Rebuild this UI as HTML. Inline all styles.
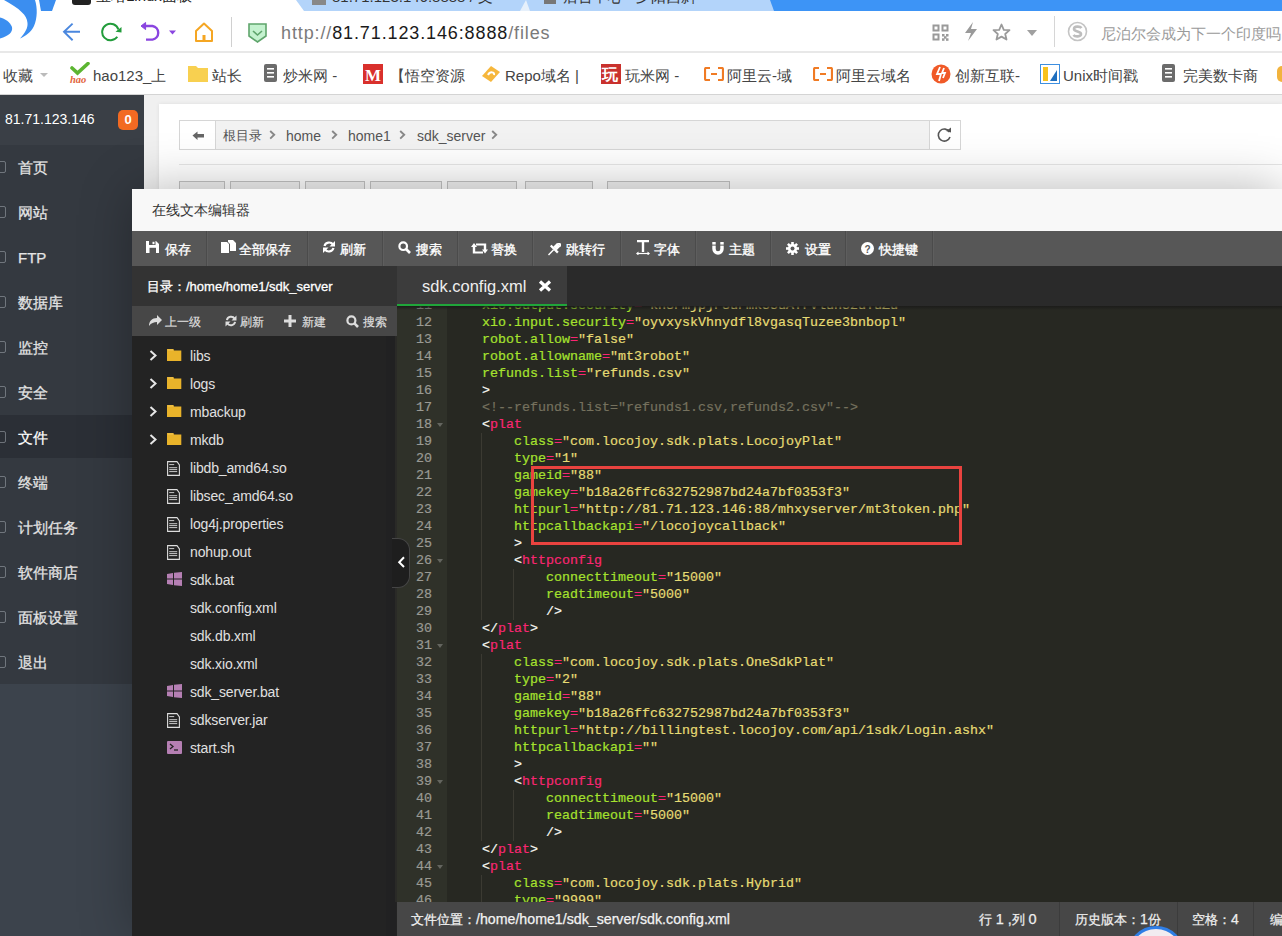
<!DOCTYPE html>
<html><head><meta charset="utf-8">
<style>
*{margin:0;padding:0;box-sizing:border-box}
html,body{width:1282px;height:936px;overflow:hidden;background:#fff;font-family:"Liberation Sans",sans-serif}
.abs{position:absolute}
#tabs{left:0;top:0;width:1282px;height:10px;background:#3d94f6}
#nav{left:0;top:10px;width:1282px;height:45px;background:#fff}
#bm{left:0;top:55px;width:1282px;height:40px;background:#fff;border-bottom:1px solid #dcdcdc}
.bmi{position:absolute;top:67px;font-size:15px;color:#444;white-space:nowrap;line-height:18px}
#side{left:0;top:96px;width:143px;height:840px;background:#363b43}
#sidehead{left:0;top:96px;width:143px;height:50px;background:#3b4048}
.mi{position:absolute;left:18px;font-size:15px;color:#e6e6e6;line-height:20px;white-space:nowrap;-webkit-text-stroke:0.25px currentColor}
#main{left:143px;top:96px;width:1139px;height:840px;background:#f0f0f0}
#modal{left:132px;top:187px;width:1150px;height:749px;background:#252525}
#mtitle{left:132px;top:187px;width:1150px;height:44px;background:#f8f8f8;border-bottom:1px solid #e5e5e5}
#mtool{left:132px;top:231px;width:1150px;height:35px;background:#575757}
.tb{position:absolute;top:240.7px;font-size:13.2px;font-weight:500;-webkit-text-stroke:0.35px #fff;color:#fff;line-height:17px;white-space:nowrap}
.sep{position:absolute;top:231px;width:1px;height:35px;background:#4a4a4a}
#fhead{left:132px;top:266px;width:265px;height:40px;background:#2d2d2d}
#fsub{left:132px;top:306px;width:265px;height:30px;background:#3b3b3b}
#flist{left:132px;top:336px;width:265px;height:600px;background:#242424}
.fi{position:absolute;font-size:14px;letter-spacing:-0.15px;color:#e0e0e0;line-height:17px;white-space:nowrap}
#etabs{left:397px;top:266px;width:885px;height:40px;background:#2a2a2a}
#code{left:397px;top:306px;width:885px;height:596px;background:#272822;overflow:hidden}
#gutter{left:397px;top:306px;width:50px;height:596px;background:#2f3129}
#status{left:397px;top:902px;width:885px;height:34px;background:#474747}
.cl{position:absolute;left:0;height:17px;line-height:17px;font-family:"Liberation Mono",monospace;font-size:13.333px;white-space:pre;color:#f8f8f2;-webkit-text-stroke:0.2px currentColor}
.ln{position:absolute;left:0;width:35px;text-align:right;height:17px;line-height:17px;font-family:"Liberation Mono",monospace;font-size:13.333px;color:#9a9a94;-webkit-text-stroke:0.2px #9a9a94}
.a{color:#a6e22e}.s{color:#e6db74}.e{color:#f92672}.t{color:#f92672}.c{color:#75715e}
</style></head><body>

<!-- tab strip -->
<div class="abs" style="left:0;top:0;width:1282px;height:11px;background:#3d94f6"></div>
<div class="abs" style="left:0;top:0;width:305px;height:11px;background:#fff"></div>
<svg class="abs" style="left:296px;top:0" width="480" height="11"><path d="M0 0 L228 0 L232 11 L8 11 Z" fill="#b3d4fa"/><path d="M222 0 L474 0 L478 11 L228 11 Z" fill="#b3d4fa"/><path d="M224 11 L230 0 L234 11Z" fill="#e6f0fb"/><path d="M483 0 L500 0 L503 6 L486 6 Z" fill="#e8f1fd"/></svg>
<div class="abs" style="left:72px;top:-4px;width:19px;height:9px;background:#222;border-radius:3px"></div>
<div class="abs" style="left:96px;top:-13px;font-size:15px;color:#222;line-height:18px;white-space:nowrap">宝塔Linux面板</div>
<div class="abs" style="left:312px;top:0;width:14px;height:5px;background:#888"></div>
<div class="abs" style="left:332px;top:-12px;font-size:15px;color:#333;line-height:18px;white-space:nowrap">81.71.123.146:8888 / 文</div>
<div class="abs" style="left:544px;top:-3px;width:12px;height:7px;background:#777"></div>
<div class="abs" style="left:563px;top:-12px;font-size:15px;color:#333;line-height:18px;white-space:nowrap">后台中心 - 夕阳西斜</div>
<!-- logo -->
<svg class="abs" style="left:0;top:0" width="60" height="45"><path d="M4 0 L35 0 C37.5 8 37.5 18 34 26 C31 32 26 36 20 38.5 C25 33 28 28 27.5 23 C27 15 20 9 4 0 Z" fill="#3b8ef0"/><path d="M0 17.5 C5 18.5 10 22 12 27 C13 32 9 36 0 38.5 Z" fill="#3b8ef0"/><path d="M39 0 L56 0 L52 11 L41 11 Z" fill="#3b8ef0"/></svg>
<!-- nav -->
<div class="abs" style="left:0;top:51px;width:1282px;height:2px;background:#e8e8e8"></div>
<svg class="abs" style="left:60px;top:20px" width="22" height="24"><path d="M20 11.75 H4 M12.6 3.6 L4 11.75 L12.6 20.2" stroke="#4a87de" stroke-width="1.9" fill="none"/></svg>
<svg class="abs" style="left:100px;top:22px" width="24" height="22"><path d="M17.3 14.76 A8.3 8.3 0 1 1 18.4 7.5" stroke="#229c3b" stroke-width="2" fill="none"/><path d="M21.5 5 L21.5 10.5 L15.5 9.8 Z" fill="#229c3b"/></svg>
<svg class="abs" style="left:140px;top:20px" width="40" height="22"><path d="M5 6 H12.5 A6.9 6.9 0 0 1 12.5 19.6 H6" stroke="#8a45e0" stroke-width="2.4" fill="none"/><path d="M1 6 L5.6 2.5 L5.6 9.6 Z" fill="#8a45e0" stroke="#8a45e0" stroke-width="1" stroke-linejoin="round"/><path d="M29 10.5 L36 10.5 L32.5 14.5 Z" fill="#8a45e0"/></svg>
<svg class="abs" style="left:194px;top:22px" width="20" height="21"><path d="M2 9 L10 1.5 L18 9 V19 H2 Z" stroke="#f5a623" stroke-width="2" fill="none" stroke-linejoin="round"/><rect x="8.5" y="13" width="3" height="6" fill="#f5a623"/></svg>
<div class="abs" style="left:231px;top:17px;width:1px;height:30px;background:#d0d0d0"></div>
<svg class="abs" style="left:247px;top:22px" width="21" height="21"><path d="M2 2 H19 V14 L10.5 20 L2 14 Z" fill="#c4f2cf" stroke="#5fa56c" stroke-width="1.6"/><path d="M6 9 L10.5 13 L15 9" stroke="#5fa56c" stroke-width="1.6" fill="none"/></svg>
<div class="abs" style="left:281px;top:22px;font-size:18px;letter-spacing:0.88px;line-height:22px;color:#7a7a7a;white-space:nowrap">http://<span style="color:#1a1a1a">81.71.123.146:8888</span>/files</div>
<svg class="abs" style="left:932px;top:24px" width="18" height="17"><g fill="none" stroke="#9a9a9a" stroke-width="2"><rect x="1.5" y="1.5" width="5" height="5"/><rect x="10.5" y="1.5" width="5" height="5"/><rect x="1.5" y="10.5" width="5" height="5"/></g><g fill="#9a9a9a"><rect x="10" y="10" width="2.5" height="2.5"/><rect x="14" y="10" width="2.5" height="2.5"/><rect x="12" y="12.2" width="2.5" height="2.5"/><rect x="10" y="14.3" width="2.5" height="2.5"/><rect x="14" y="14.3" width="2.5" height="2.5"/></g></svg>
<svg class="abs" style="left:963px;top:22px" width="16" height="19"><path d="M10 0 L2 11 H8 L5 19 L14 7 H8 Z" fill="#9a9a9a"/></svg>
<svg class="abs" style="left:992px;top:23px" width="19" height="18"><path d="M9.5 1.5 L11.8 6.8 L17.5 7.2 L13.2 11 L14.5 16.5 L9.5 13.6 L4.5 16.5 L5.8 11 L1.5 7.2 L7.2 6.8 Z" fill="none" stroke="#9a9a9a" stroke-width="1.8" stroke-linejoin="round"/></svg>
<svg class="abs" style="left:1027px;top:30px" width="11" height="7"><path d="M0 0 H10 L5 6 Z" fill="#a0a0a0"/></svg>
<div class="abs" style="left:1054px;top:16px;width:1px;height:31px;background:#d6d6d6"></div>
<svg class="abs" style="left:1067px;top:21px" width="21" height="21"><circle cx="10.5" cy="10.5" r="9" fill="none" stroke="#c4c4c4" stroke-width="1.6"/><path d="M14.5 7 C13 5 7 5 7 8 C7 11 14 10 14 13 C14 16 8 16 6.5 14" fill="none" stroke="#bdbdbd" stroke-width="2.6"/></svg>
<div class="abs" style="left:1101px;top:25px;font-size:15px;line-height:18px;color:#9a9a9a;white-space:nowrap">尼泊尔会成为下一个印度吗</div>
<!-- bookmarks -->
<div class="abs" style="left:0;top:94px;width:1282px;height:1px;background:#d4d4d4"></div>
<div class="bmi" style="left:3px">收藏</div>
<svg class="abs" style="left:40px;top:73px" width="9" height="5"><path d="M0 0 H8 L4 4Z" fill="#bbb"/></svg>
<svg class="abs" style="left:69px;top:62px" width="22" height="22"><path d="M3 6 L8.5 11 L19 1.5" stroke="#5cb531" stroke-width="3.6" fill="none" stroke-linecap="round"/><text x="1" y="20.5" font-size="10.5" fill="#e2643c" font-style="italic" font-weight="bold" font-family="Liberation Serif">hao</text></svg>
<div class="bmi" style="left:93px">hao123_上</div>
<svg class="abs" style="left:188px;top:64px" width="21" height="19"><path d="M0 2 H8 L10 4 H20 V18 H0 Z" fill="#f8d050"/></svg>
<div class="bmi" style="left:212px">站长</div>
<svg class="abs" style="left:264px;top:64px" width="13" height="18"><rect x="0" y="0" width="13" height="18" rx="2" fill="#6b6b6b"/><rect x="3" y="4" width="7" height="1.6" fill="#fff"/><rect x="3" y="8" width="7" height="1.6" fill="#fff"/><rect x="3" y="12" width="7" height="1.6" fill="#fff"/></svg>
<div class="bmi" style="left:283px">炒米网 -</div>
<svg class="abs" style="left:363px;top:64px" width="20" height="20"><rect width="20" height="20" fill="#d9302c"/><text x="2" y="17" font-size="17" font-weight="bold" fill="#fff" font-family="Liberation Serif">M</text></svg>
<div class="bmi" style="left:390px">【悟空资源</div>
<svg class="abs" style="left:482px;top:66px" width="19" height="17"><path d="M9 0 L18 6 L9 16 L0 10 Z" fill="#f6b73c"/><path d="M6 9 C8 5 13 6 12 9" stroke="#fff" stroke-width="2" fill="none"/></svg>
<div class="bmi" style="left:505px">Repo域名 |</div>
<svg class="abs" style="left:601px;top:64px" width="20" height="20"><rect width="20" height="20" fill="#c9312d"/><text x="1" y="16" font-size="16" font-weight="bold" fill="#fff">玩</text></svg>
<div class="bmi" style="left:625px">玩米网 -</div>
<svg class="abs" style="left:704px;top:67px" width="20" height="14"><path d="M6 1 H2 C1 1 1 2 1 3 V11 C1 12 1 13 2 13 H6 M14 1 H18 C19 1 19 2 19 3 V11 C19 12 19 13 18 13 H14" stroke="#f07b24" stroke-width="2.2" fill="none"/><rect x="7" y="6" width="6" height="2" fill="#f07b24"/></svg>
<div class="bmi" style="left:727px">阿里云-域</div>
<svg class="abs" style="left:813px;top:67px" width="20" height="14"><path d="M6 1 H2 C1 1 1 2 1 3 V11 C1 12 1 13 2 13 H6 M14 1 H18 C19 1 19 2 19 3 V11 C19 12 19 13 18 13 H14" stroke="#f07b24" stroke-width="2.2" fill="none"/><rect x="7" y="6" width="6" height="2" fill="#f07b24"/></svg>
<div class="bmi" style="left:836px">阿里云域名</div>
<svg class="abs" style="left:931px;top:64px" width="20" height="20"><circle cx="10" cy="10" r="9.5" fill="#f05a28"/><path d="M9 3 L6 10 H10 L8 17 M13 4 L11 9 H14 L12 14" stroke="#fff" stroke-width="1.8" fill="none"/></svg>
<div class="bmi" style="left:955px">创新互联-</div>
<svg class="abs" style="left:1040px;top:64px" width="20" height="20"><rect x="0.5" y="0.5" width="19" height="19" fill="#fff" stroke="#3d8fe0"/><path d="M3 3 H8 V17 H3 Z" fill="#f8c21c"/><path d="M10 17 L17 6 V17 Z" fill="#1f6fbf"/></svg>
<div class="bmi" style="left:1063px">Unix时间戳</div>
<svg class="abs" style="left:1162px;top:64px" width="13" height="18"><rect x="0" y="0" width="13" height="18" rx="2" fill="#6b6b6b"/><rect x="3" y="4" width="7" height="1.6" fill="#fff"/><rect x="3" y="8" width="7" height="1.6" fill="#fff"/><rect x="3" y="12" width="7" height="1.6" fill="#fff"/></svg>
<div class="bmi" style="left:1183px">完美数卡商</div>
<div class="abs" style="left:1277px;top:66px;width:10px;height:16px;border-radius:8px;background:#f2b33d"></div>

<div class="abs" style="left:0;top:95px;width:144px;height:841px;background:#3c434c"></div>
<div class="abs" style="left:0;top:95px;width:144px;height:50px;background:#3a3f46"></div>
<div class="abs" style="left:0;top:145px;width:144px;height:539px;background:#343940"></div>
<div class="abs" style="left:5px;top:111px;font-size:14px;line-height:17px;color:#fff;white-space:nowrap">81.71.123.146</div>
<div class="abs" style="left:118px;top:110px;width:20px;height:20px;border-radius:5px;background:#f26a22;color:#fff;font-size:13px;font-weight:bold;line-height:20px;text-align:center">0</div>
<div class="mi" style="top:158px;color:#e4e4e4">首页</div>
<div class="abs" style="left:-5px;top:161px;width:11px;height:12px;border:1px solid #9aa0a6;border-radius:2px;opacity:.6"></div>
<div class="mi" style="top:203px;color:#e4e4e4">网站</div>
<div class="abs" style="left:-5px;top:206px;width:11px;height:12px;border:1px solid #9aa0a6;border-radius:2px;opacity:.6"></div>
<div class="mi" style="top:248px;color:#e4e4e4">FTP</div>
<div class="abs" style="left:-5px;top:251px;width:11px;height:12px;border:1px solid #9aa0a6;border-radius:2px;opacity:.6"></div>
<div class="mi" style="top:293px;color:#e4e4e4">数据库</div>
<div class="abs" style="left:-5px;top:296px;width:11px;height:12px;border:1px solid #9aa0a6;border-radius:2px;opacity:.6"></div>
<div class="mi" style="top:338px;color:#e4e4e4">监控</div>
<div class="abs" style="left:-5px;top:341px;width:11px;height:12px;border:1px solid #9aa0a6;border-radius:2px;opacity:.6"></div>
<div class="mi" style="top:383px;color:#e4e4e4">安全</div>
<div class="abs" style="left:-5px;top:386px;width:11px;height:12px;border:1px solid #9aa0a6;border-radius:2px;opacity:.6"></div>
<div class="abs" style="left:0;top:415px;width:144px;height:43px;background:#2b2f36"></div>
<div class="mi" style="top:428px;color:#fff">文件</div>
<div class="abs" style="left:-5px;top:431px;width:11px;height:12px;border:1px solid #9aa0a6;border-radius:2px;opacity:.6"></div>
<div class="mi" style="top:473px;color:#e4e4e4">终端</div>
<div class="abs" style="left:-5px;top:476px;width:11px;height:12px;border:1px solid #9aa0a6;border-radius:2px;opacity:.6"></div>
<div class="mi" style="top:518px;color:#e4e4e4">计划任务</div>
<div class="abs" style="left:-5px;top:521px;width:11px;height:12px;border:1px solid #9aa0a6;border-radius:2px;opacity:.6"></div>
<div class="mi" style="top:563px;color:#e4e4e4">软件商店</div>
<div class="abs" style="left:-5px;top:566px;width:11px;height:12px;border:1px solid #9aa0a6;border-radius:2px;opacity:.6"></div>
<div class="mi" style="top:608px;color:#e4e4e4">面板设置</div>
<div class="abs" style="left:-5px;top:611px;width:11px;height:12px;border:1px solid #9aa0a6;border-radius:2px;opacity:.6"></div>
<div class="mi" style="top:653px;color:#e4e4e4">退出</div>
<div class="abs" style="left:-5px;top:656px;width:11px;height:12px;border:1px solid #9aa0a6;border-radius:2px;opacity:.6"></div>
<div class="abs" style="left:144px;top:95px;width:1138px;height:841px;background:#f0f0f0"></div>
<div class="abs" style="left:159px;top:104px;width:1123px;height:832px;background:#fff;box-shadow:0 0 4px rgba(0,0,0,.08)"></div>
<div class="abs" style="left:179px;top:120px;width:782px;height:30px;border:1px solid #d6d6d6;background:#f2f2f2"></div>
<div class="abs" style="left:180px;top:121px;width:36px;height:28px;background:#fff;border-right:1px solid #d6d6d6"></div>
<svg class="abs" style="left:192px;top:131px" width="13" height="10"><path d="M0.5 4.5 L5.5 0.5 V3 H12 V6.5 H5.5 V9 Z" fill="#666"/></svg>
<div class="abs" style="left:223px;top:128px;font-size:12.5px;line-height:17px;color:#555;white-space:nowrap">根目录</div>
<div class="abs" style="left:286px;top:128px;font-size:14px;line-height:17px;color:#555;white-space:nowrap">home</div>
<div class="abs" style="left:348px;top:128px;font-size:14px;line-height:17px;color:#555;white-space:nowrap">home1</div>
<div class="abs" style="left:417px;top:128px;font-size:14px;line-height:17px;color:#555;white-space:nowrap">sdk_server</div>
<svg class="abs" style="left:269px;top:130px" width="7" height="10"><path d="M1.2 1 L5.2 4.8 L1.2 8.6" stroke="#888" stroke-width="1.9" fill="none"/></svg>
<svg class="abs" style="left:331px;top:130px" width="7" height="10"><path d="M1.2 1 L5.2 4.8 L1.2 8.6" stroke="#888" stroke-width="1.9" fill="none"/></svg>
<svg class="abs" style="left:399px;top:130px" width="7" height="10"><path d="M1.2 1 L5.2 4.8 L1.2 8.6" stroke="#888" stroke-width="1.9" fill="none"/></svg>
<svg class="abs" style="left:491px;top:130px" width="7" height="10"><path d="M1.2 1 L5.2 4.8 L1.2 8.6" stroke="#888" stroke-width="1.9" fill="none"/></svg>
<div class="abs" style="left:929px;top:121px;width:31px;height:28px;background:#fff;border-left:1px solid #d6d6d6"></div>
<svg class="abs" style="left:936px;top:127px" width="17" height="17"><path d="M13.5 5 A6 6 0 1 0 14 10" stroke="#555" stroke-width="1.6" fill="none"/><path d="M10 4 L15 5.5 L15 0.5 Z" fill="#555"/></svg>
<div class="abs" style="left:179px;top:164px;width:1103px;height:1px;background:#e6e6e6"></div>
<div class="abs" style="left:179px;top:181px;width:46px;height:30px;border:1px solid #c4c4c4;background:#f3f3f3"></div>
<div class="abs" style="left:230px;top:181px;width:70px;height:30px;border:1px solid #c4c4c4;background:#f3f3f3"></div>
<div class="abs" style="left:305px;top:181px;width:60px;height:30px;border:1px solid #c4c4c4;background:#f3f3f3"></div>
<div class="abs" style="left:370px;top:181px;width:72px;height:30px;border:1px solid #c4c4c4;background:#f3f3f3"></div>
<div class="abs" style="left:447px;top:181px;width:70px;height:30px;border:1px solid #c4c4c4;background:#f3f3f3"></div>
<div class="abs" style="left:525px;top:181px;width:68px;height:30px;border:1px solid #c4c4c4;background:#f3f3f3"></div>
<div class="abs" style="left:607px;top:181px;width:123px;height:30px;border:1px solid #c4c4c4;background:#f3f3f3"></div>
<div class="abs" style="left:132px;top:189px;width:1150px;height:747px;background:#232323;box-shadow:1px 1px 50px rgba(0,0,0,.3)"></div>
<div class="abs" style="left:132px;top:189px;width:1150px;height:42px;background:#f8f8f8"></div>
<div class="abs" style="left:152px;top:202px;font-size:14px;line-height:17px;color:#333;white-space:nowrap">在线文本编辑器</div>
<div class="abs" style="left:132px;top:231px;width:1150px;height:35px;background:#575757"></div>
<div class="abs" style="left:206px;top:231px;width:1px;height:35px;background:#4b4b4b"></div>
<div class="abs" style="left:207px;top:231px;width:1px;height:35px;background:#5e5e5e"></div>
<div class="abs" style="left:307px;top:231px;width:1px;height:35px;background:#4b4b4b"></div>
<div class="abs" style="left:308px;top:231px;width:1px;height:35px;background:#5e5e5e"></div>
<div class="abs" style="left:382px;top:231px;width:1px;height:35px;background:#4b4b4b"></div>
<div class="abs" style="left:383px;top:231px;width:1px;height:35px;background:#5e5e5e"></div>
<div class="abs" style="left:457px;top:231px;width:1px;height:35px;background:#4b4b4b"></div>
<div class="abs" style="left:458px;top:231px;width:1px;height:35px;background:#5e5e5e"></div>
<div class="abs" style="left:532px;top:231px;width:1px;height:35px;background:#4b4b4b"></div>
<div class="abs" style="left:533px;top:231px;width:1px;height:35px;background:#5e5e5e"></div>
<div class="abs" style="left:620px;top:231px;width:1px;height:35px;background:#4b4b4b"></div>
<div class="abs" style="left:621px;top:231px;width:1px;height:35px;background:#5e5e5e"></div>
<div class="abs" style="left:695px;top:231px;width:1px;height:35px;background:#4b4b4b"></div>
<div class="abs" style="left:696px;top:231px;width:1px;height:35px;background:#5e5e5e"></div>
<div class="abs" style="left:770px;top:231px;width:1px;height:35px;background:#4b4b4b"></div>
<div class="abs" style="left:771px;top:231px;width:1px;height:35px;background:#5e5e5e"></div>
<div class="abs" style="left:845px;top:231px;width:1px;height:35px;background:#4b4b4b"></div>
<div class="abs" style="left:846px;top:231px;width:1px;height:35px;background:#5e5e5e"></div>
<div class="abs" style="left:932px;top:231px;width:1px;height:35px;background:#4b4b4b"></div>
<div class="abs" style="left:933px;top:231px;width:1px;height:35px;background:#5e5e5e"></div>
<div class="tb" style="left:165px">保存</div>
<div class="tb" style="left:239px">全部保存</div>
<div class="tb" style="left:340px">刷新</div>
<div class="tb" style="left:416px">搜索</div>
<div class="tb" style="left:491px">替换</div>
<div class="tb" style="left:566px">跳转行</div>
<div class="tb" style="left:654px">字体</div>
<div class="tb" style="left:729px">主题</div>
<div class="tb" style="left:805px">设置</div>
<div class="tb" style="left:879px">快捷键</div>

<svg class="abs" style="left:146px;top:241px" width="13" height="12"><path d="M0 0 H10 L13 3 V12 H0 Z" fill="#fff"/><rect x="3" y="0" width="6.5" height="4" fill="#575757"/><rect x="6.5" y="0.8" width="2" height="2.4" fill="#fff"/><rect x="3.5" y="6.8" width="6.5" height="5.2" fill="#575757"/></svg>
<svg class="abs" style="left:221px;top:240px" width="15" height="14"><path d="M0 2 H6 L8 4 V13 H0 Z" fill="#fff"/><path d="M7 0 H12 L15 3 V11 H9 V4 L7 2 Z" fill="#fff"/></svg>
<svg class="abs" style="left:323px;top:241px" width="12" height="12"><path d="M10 3.5 A4.8 4.8 0 0 0 1.5 5" stroke="#fff" stroke-width="2.2" fill="none"/><path d="M2 8.5 A4.8 4.8 0 0 0 10.5 7" stroke="#fff" stroke-width="2.2" fill="none"/><path d="M12 0 V5.5 H6.5 Z" fill="#fff"/><path d="M0 12 V6.5 H5.5 Z" fill="#fff"/></svg>
<svg class="abs" style="left:398px;top:241px" width="13" height="13"><circle cx="5.2" cy="5.2" r="3.8" stroke="#fff" stroke-width="2.2" fill="none"/><path d="M8 8 L12 12" stroke="#fff" stroke-width="2.6"/></svg>
<svg class="abs" style="left:471px;top:243px" width="17" height="11"><path d="M0 4 L3 0 L6 4 H4.2 V8.5 H12 V10.5 H1.8 V4 Z" fill="#fff"/><path d="M11 6.5 H12.8 V2.5 H5 V0.5 H15.2 V6.5 H17 L14 10.5 Z" fill="#fff"/></svg>
<svg class="abs" style="left:546px;top:242.5px" width="15" height="14"><g transform="translate(8.6,5.8) rotate(45) scale(1.2) translate(0,-6.8)" fill="#fff"><rect x="-3" y="0" width="6" height="1.9"/><rect x="-2" y="1.8" width="4" height="4.6"/><rect x="-4.2" y="6.2" width="8.4" height="1.9"/><rect x="-0.6" y="8" width="1.2" height="6"/></g></svg>
<svg class="abs" style="left:636px;top:240px" width="14" height="15"><path d="M1 1 H13 M7 1 V12" stroke="#fff" stroke-width="2.4"/><path d="M1 13.5 H13" stroke="#fff" stroke-width="1.2"/><path d="M0 13.5 L2.5 11.5 V15.5Z M14 13.5 L11.5 11.5 V15.5Z" fill="#fff"/></svg>
<svg class="abs" style="left:712px;top:242px" width="12" height="13"><path d="M2 0 V7 A4 4 0 0 0 10 7 V0" stroke="#fff" stroke-width="3.4" fill="none"/><rect x="0" y="2.6" width="12" height="1" fill="#575757"/></svg>
<svg class="abs" style="left:786px;top:241.5px" width="13" height="13"><g fill="#fff"><circle cx="6.5" cy="6.5" r="4.6"/><rect x="5.2" y="0" width="2.6" height="13"/><rect x="0" y="5.2" width="13" height="2.6"/><rect x="5.2" y="0" width="2.6" height="13" transform="rotate(45 6.5 6.5)"/><rect x="5.2" y="0" width="2.6" height="13" transform="rotate(-45 6.5 6.5)"/></g><circle cx="6.5" cy="6.5" r="2" fill="#575757"/></svg>
<svg class="abs" style="left:861px;top:242px" width="13" height="13"><circle cx="6.5" cy="6.5" r="6.5" fill="#fff"/><text x="3.6" y="10.5" font-size="10" font-weight="bold" fill="#575757" font-family="Liberation Sans">?</text></svg>

<div class="abs" style="left:132px;top:266px;width:265px;height:40px;background:#333"></div>
<div class="abs" style="left:147px;top:278px;font-size:13px;line-height:17px;color:#fff;white-space:nowrap;font-weight:500;-webkit-text-stroke:0.3px #fff">目录：/home/home1/sdk_server</div>
<div class="abs" style="left:132px;top:306px;width:265px;height:30px;background:#474747"></div>
<div class="abs" style="left:165px;top:313.8px;font-size:12px;line-height:16px;color:#ddd;white-space:nowrap;font-weight:500;-webkit-text-stroke:0.2px #ddd">上一级</div>
<div class="abs" style="left:240px;top:313.8px;font-size:12px;line-height:16px;color:#ddd;white-space:nowrap;font-weight:500;-webkit-text-stroke:0.2px #ddd">刷新</div>
<div class="abs" style="left:302px;top:313.8px;font-size:12px;line-height:16px;color:#ddd;white-space:nowrap;font-weight:500;-webkit-text-stroke:0.2px #ddd">新建</div>
<div class="abs" style="left:363px;top:313.8px;font-size:12px;line-height:16px;color:#ddd;white-space:nowrap;font-weight:500;-webkit-text-stroke:0.2px #ddd">搜索</div>
<svg class="abs" style="left:149px;top:315px" width="13" height="11"><path d="M13 5 L8 0 V3 C3 3 0 6 0 11 C2 8 5 7 8 7 V10 Z" fill="#ddd"/></svg>
<svg class="abs" style="left:224.5px;top:314.5px" width="12" height="12" viewBox="-0.5 -0.5 12 12"><path d="M9.2 3.2 A4.3 4.3 0 0 0 1.4 4.6" stroke="#ddd" stroke-width="2" fill="none"/><path d="M1.8 7.8 A4.3 4.3 0 0 0 9.6 6.4" stroke="#ddd" stroke-width="2" fill="none"/><path d="M11 0 V5 H6 Z" fill="#ddd"/><path d="M0 11 V6 H5 Z" fill="#ddd"/></svg>
<svg class="abs" style="left:284px;top:315px" width="12" height="12"><path d="M6 0 V12 M0 6 H12" stroke="#ddd" stroke-width="3"/></svg>
<svg class="abs" style="left:346px;top:314.5px" width="13" height="13"><circle cx="5.4" cy="5.4" r="4" stroke="#ddd" stroke-width="2.2" fill="none"/><path d="M8.2 8.2 L12 12" stroke="#ddd" stroke-width="2.6"/></svg>
<div class="fi" style="left:190px;top:347.5px">libs</div>
<svg class="abs" style="left:149px;top:350px" width="9" height="11"><path d="M1.5 1 L6.5 5.5 L1.5 10" stroke="#e6e6e6" stroke-width="2" fill="none"/></svg>
<svg class="abs" style="left:167px;top:349px" width="15" height="13"><path d="M0 0 H6.5 L7 1.6 H14.3 V12 H0 Z" fill="#e9b32a"/><path d="M0.8 1 H6" stroke="#f3d27a" stroke-width="0.6"/></svg>
<div class="fi" style="left:190px;top:375.5px">logs</div>
<svg class="abs" style="left:149px;top:378px" width="9" height="11"><path d="M1.5 1 L6.5 5.5 L1.5 10" stroke="#e6e6e6" stroke-width="2" fill="none"/></svg>
<svg class="abs" style="left:167px;top:377px" width="15" height="13"><path d="M0 0 H6.5 L7 1.6 H14.3 V12 H0 Z" fill="#e9b32a"/><path d="M0.8 1 H6" stroke="#f3d27a" stroke-width="0.6"/></svg>
<div class="fi" style="left:190px;top:403.5px">mbackup</div>
<svg class="abs" style="left:149px;top:406px" width="9" height="11"><path d="M1.5 1 L6.5 5.5 L1.5 10" stroke="#e6e6e6" stroke-width="2" fill="none"/></svg>
<svg class="abs" style="left:167px;top:405px" width="15" height="13"><path d="M0 0 H6.5 L7 1.6 H14.3 V12 H0 Z" fill="#e9b32a"/><path d="M0.8 1 H6" stroke="#f3d27a" stroke-width="0.6"/></svg>
<div class="fi" style="left:190px;top:431.5px">mkdb</div>
<svg class="abs" style="left:149px;top:434px" width="9" height="11"><path d="M1.5 1 L6.5 5.5 L1.5 10" stroke="#e6e6e6" stroke-width="2" fill="none"/></svg>
<svg class="abs" style="left:167px;top:433px" width="15" height="13"><path d="M0 0 H6.5 L7 1.6 H14.3 V12 H0 Z" fill="#e9b32a"/><path d="M0.8 1 H6" stroke="#f3d27a" stroke-width="0.6"/></svg>
<div class="fi" style="left:190px;top:459.5px">libdb_amd64.so</div>
<svg class="abs" style="left:167px;top:461px" width="13" height="15"><path d="M0.6 0.6 H10 L12.4 4 V14.4 H0.6 Z" stroke="#ddd" stroke-width="1.1" fill="none"/><path d="M2.2 3.6 H7.2 M2.2 6.7 H10.2 M2.2 8.6 H10.2 M2.2 10.6 H10.2" stroke="#ddd" stroke-width="0.9"/></svg>
<div class="fi" style="left:190px;top:487.5px">libsec_amd64.so</div>
<svg class="abs" style="left:167px;top:489px" width="13" height="15"><path d="M0.6 0.6 H10 L12.4 4 V14.4 H0.6 Z" stroke="#ddd" stroke-width="1.1" fill="none"/><path d="M2.2 3.6 H7.2 M2.2 6.7 H10.2 M2.2 8.6 H10.2 M2.2 10.6 H10.2" stroke="#ddd" stroke-width="0.9"/></svg>
<div class="fi" style="left:190px;top:515.5px">log4j.properties</div>
<svg class="abs" style="left:167px;top:517px" width="13" height="15"><path d="M0.6 0.6 H10 L12.4 4 V14.4 H0.6 Z" stroke="#ddd" stroke-width="1.1" fill="none"/><path d="M2.2 3.6 H7.2 M2.2 6.7 H10.2 M2.2 8.6 H10.2 M2.2 10.6 H10.2" stroke="#ddd" stroke-width="0.9"/></svg>
<div class="fi" style="left:190px;top:543.5px">nohup.out</div>
<svg class="abs" style="left:167px;top:545px" width="13" height="15"><path d="M0.6 0.6 H10 L12.4 4 V14.4 H0.6 Z" stroke="#ddd" stroke-width="1.1" fill="none"/><path d="M2.2 3.6 H7.2 M2.2 6.7 H10.2 M2.2 8.6 H10.2 M2.2 10.6 H10.2" stroke="#ddd" stroke-width="0.9"/></svg>
<div class="fi" style="left:190px;top:571.5px">sdk.bat</div>
<svg class="abs" style="left:167px;top:572px" width="15" height="14"><path d="M0 2 L6 1 V6.5 H0 Z M7 0.8 L15 0 V6.5 H7 Z M0 7.5 H6 V13 L0 12 Z M7 7.5 H15 V14 L7 13.2 Z" fill="#b57fb3"/></svg>
<div class="fi" style="left:190px;top:599.5px">sdk.config.xml</div>
<div class="fi" style="left:190px;top:627.5px">sdk.db.xml</div>
<div class="fi" style="left:190px;top:655.5px">sdk.xio.xml</div>
<div class="fi" style="left:190px;top:683.5px">sdk_server.bat</div>
<svg class="abs" style="left:167px;top:684px" width="15" height="14"><path d="M0 2 L6 1 V6.5 H0 Z M7 0.8 L15 0 V6.5 H7 Z M0 7.5 H6 V13 L0 12 Z M7 7.5 H15 V14 L7 13.2 Z" fill="#b57fb3"/></svg>
<div class="fi" style="left:190px;top:711.5px">sdkserver.jar</div>
<svg class="abs" style="left:167px;top:713px" width="13" height="15"><path d="M0.6 0.6 H10 L12.4 4 V14.4 H0.6 Z" stroke="#ddd" stroke-width="1.1" fill="none"/><path d="M2.2 3.6 H7.2 M2.2 6.7 H10.2 M2.2 8.6 H10.2 M2.2 10.6 H10.2" stroke="#ddd" stroke-width="0.9"/></svg>
<div class="fi" style="left:190px;top:739.5px">start.sh</div>
<svg class="abs" style="left:167px;top:741px" width="15" height="13"><rect width="15" height="13" rx="1" fill="#b57fb3"/><path d="M3 3 L6 5.5 L3 8" stroke="#232323" stroke-width="1.3" fill="none"/><path d="M7 9 H11" stroke="#232323" stroke-width="1.3"/></svg>
<div class="abs" style="left:397px;top:266px;width:885px;height:40px;background:#2a2a2a"></div>
<div class="abs" style="left:397px;top:266px;width:170px;height:38px;background:#3c3c3c"></div>
<div class="abs" style="left:397px;top:304px;width:170px;height:2px;background:#20a53a"></div>
<div class="abs" style="left:422px;top:277px;font-size:16.5px;line-height:19px;color:#eee;white-space:nowrap">sdk.config.xml</div>
<svg class="abs" style="left:538px;top:280px" width="14" height="12"><path d="M2 1.5 L12 10.5 M12 1.5 L2 10.5" stroke="#fff" stroke-width="3.2"/></svg>
<div class="abs" style="left:397px;top:306px;width:885px;height:596px;background:#272822;overflow:hidden">
<div class="abs" style="left:0;top:0;width:50px;height:596px;background:#2f3129"></div>
<div class="ln" style="top:-9px">11</div>
<div class="cl" style="left:53px;top:-9px">    <span class="a">xio.output.security</span><span class="e">=</span><span class="s">&quot;kh3FmjpjF3uFmk55uAYrVlun5zuYuZu&quot;</span></div>
<div class="ln" style="top:8px">12</div>
<div class="cl" style="left:53px;top:8px">    <span class="a">xio.input.security</span><span class="e">=</span><span class="s">&quot;oyvxyskVhnydfl8vgasqTuzee3bnbopl&quot;</span></div>
<div class="ln" style="top:25px">13</div>
<div class="cl" style="left:53px;top:25px">    <span class="a">robot.allow</span><span class="e">=</span><span class="s">&quot;false&quot;</span></div>
<div class="ln" style="top:42px">14</div>
<div class="cl" style="left:53px;top:42px">    <span class="a">robot.allowname</span><span class="e">=</span><span class="s">&quot;mt3robot&quot;</span></div>
<div class="ln" style="top:59px">15</div>
<div class="cl" style="left:53px;top:59px">    <span class="a">refunds.list</span><span class="e">=</span><span class="s">&quot;refunds.csv&quot;</span></div>
<div class="ln" style="top:76px">16</div>
<div class="cl" style="left:53px;top:76px">    &gt;</div>
<div class="ln" style="top:93px">17</div>
<div class="cl" style="left:53px;top:93px">    <span class="c">&lt;!--refunds.list=&quot;refunds1.csv,refunds2.csv&quot;--&gt;</span></div>
<div class="ln" style="top:110px">18</div>
<svg class="abs" style="left:40px;top:117px" width="6" height="4"><path d="M0 0 H6 L3 4Z" fill="#64655f"/></svg>
<div class="cl" style="left:53px;top:110px">    &lt;<span class="t">plat</span></div>
<div class="ln" style="top:127px">19</div>
<div class="cl" style="left:53px;top:127px">        <span class="a">class</span><span class="e">=</span><span class="s">&quot;com.locojoy.sdk.plats.LocojoyPlat&quot;</span></div>
<div class="ln" style="top:144px">20</div>
<div class="cl" style="left:53px;top:144px">        <span class="a">type</span><span class="e">=</span><span class="s">&quot;1&quot;</span></div>
<div class="ln" style="top:161px">21</div>
<div class="cl" style="left:53px;top:161px">        <span class="a">gameid</span><span class="e">=</span><span class="s">&quot;88&quot;</span></div>
<div class="ln" style="top:178px">22</div>
<div class="cl" style="left:53px;top:178px">        <span class="a">gamekey</span><span class="e">=</span><span class="s">&quot;b18a26ffc632752987bd24a7bf0353f3&quot;</span></div>
<div class="ln" style="top:195px">23</div>
<div class="cl" style="left:53px;top:195px">        <span class="a">httpurl</span><span class="e">=</span><span class="s">&quot;http://81.71.123.146:88/mhxyserver/mt3token.php&quot;</span></div>
<div class="ln" style="top:212px">24</div>
<div class="cl" style="left:53px;top:212px">        <span class="a">httpcallbackapi</span><span class="e">=</span><span class="s">&quot;/locojoycallback&quot;</span></div>
<div class="ln" style="top:229px">25</div>
<div class="cl" style="left:53px;top:229px">        &gt;</div>
<div class="ln" style="top:246px">26</div>
<svg class="abs" style="left:40px;top:253px" width="6" height="4"><path d="M0 0 H6 L3 4Z" fill="#64655f"/></svg>
<div class="cl" style="left:53px;top:246px">        &lt;<span class="t">httpconfig</span></div>
<div class="ln" style="top:263px">27</div>
<div class="cl" style="left:53px;top:263px">            <span class="a">connecttimeout</span><span class="e">=</span><span class="s">&quot;15000&quot;</span></div>
<div class="ln" style="top:280px">28</div>
<div class="cl" style="left:53px;top:280px">            <span class="a">readtimeout</span><span class="e">=</span><span class="s">&quot;5000&quot;</span></div>
<div class="ln" style="top:297px">29</div>
<div class="cl" style="left:53px;top:297px">            /&gt;</div>
<div class="ln" style="top:314px">30</div>
<div class="cl" style="left:53px;top:314px">    &lt;/<span class="t">plat</span>&gt;</div>
<div class="ln" style="top:331px">31</div>
<svg class="abs" style="left:40px;top:338px" width="6" height="4"><path d="M0 0 H6 L3 4Z" fill="#64655f"/></svg>
<div class="cl" style="left:53px;top:331px">    &lt;<span class="t">plat</span></div>
<div class="ln" style="top:348px">32</div>
<div class="cl" style="left:53px;top:348px">        <span class="a">class</span><span class="e">=</span><span class="s">&quot;com.locojoy.sdk.plats.OneSdkPlat&quot;</span></div>
<div class="ln" style="top:365px">33</div>
<div class="cl" style="left:53px;top:365px">        <span class="a">type</span><span class="e">=</span><span class="s">&quot;2&quot;</span></div>
<div class="ln" style="top:382px">34</div>
<div class="cl" style="left:53px;top:382px">        <span class="a">gameid</span><span class="e">=</span><span class="s">&quot;88&quot;</span></div>
<div class="ln" style="top:399px">35</div>
<div class="cl" style="left:53px;top:399px">        <span class="a">gamekey</span><span class="e">=</span><span class="s">&quot;b18a26ffc632752987bd24a7bf0353f3&quot;</span></div>
<div class="ln" style="top:416px">36</div>
<div class="cl" style="left:53px;top:416px">        <span class="a">httpurl</span><span class="e">=</span><span class="s">&quot;http://billingtest.locojoy.com/api/1sdk/Login.ashx&quot;</span></div>
<div class="ln" style="top:433px">37</div>
<div class="cl" style="left:53px;top:433px">        <span class="a">httpcallbackapi</span><span class="e">=</span><span class="s">&quot;&quot;</span></div>
<div class="ln" style="top:450px">38</div>
<div class="cl" style="left:53px;top:450px">        &gt;</div>
<div class="ln" style="top:467px">39</div>
<svg class="abs" style="left:40px;top:474px" width="6" height="4"><path d="M0 0 H6 L3 4Z" fill="#64655f"/></svg>
<div class="cl" style="left:53px;top:467px">        &lt;<span class="t">httpconfig</span></div>
<div class="ln" style="top:484px">40</div>
<div class="cl" style="left:53px;top:484px">            <span class="a">connecttimeout</span><span class="e">=</span><span class="s">&quot;15000&quot;</span></div>
<div class="ln" style="top:501px">41</div>
<div class="cl" style="left:53px;top:501px">            <span class="a">readtimeout</span><span class="e">=</span><span class="s">&quot;5000&quot;</span></div>
<div class="ln" style="top:518px">42</div>
<div class="cl" style="left:53px;top:518px">            /&gt;</div>
<div class="ln" style="top:535px">43</div>
<div class="cl" style="left:53px;top:535px">    &lt;/<span class="t">plat</span>&gt;</div>
<div class="ln" style="top:552px">44</div>
<svg class="abs" style="left:40px;top:559px" width="6" height="4"><path d="M0 0 H6 L3 4Z" fill="#64655f"/></svg>
<div class="cl" style="left:53px;top:552px">    &lt;<span class="t">plat</span></div>
<div class="ln" style="top:569px">45</div>
<div class="cl" style="left:53px;top:569px">        <span class="a">class</span><span class="e">=</span><span class="s">&quot;com.locojoy.sdk.plats.Hybrid&quot;</span></div>
<div class="ln" style="top:586px">46</div>
<div class="cl" style="left:53px;top:586px">        <span class="a">type</span><span class="e">=</span><span class="s">&quot;9999&quot;</span></div>
<div class="abs" style="left:84px;top:127px;width:1px;height:17px;background:#3b3a32"></div>
<div class="abs" style="left:84px;top:144px;width:1px;height:17px;background:#3b3a32"></div>
<div class="abs" style="left:84px;top:161px;width:1px;height:17px;background:#3b3a32"></div>
<div class="abs" style="left:84px;top:178px;width:1px;height:17px;background:#3b3a32"></div>
<div class="abs" style="left:84px;top:195px;width:1px;height:17px;background:#3b3a32"></div>
<div class="abs" style="left:84px;top:212px;width:1px;height:17px;background:#3b3a32"></div>
<div class="abs" style="left:84px;top:229px;width:1px;height:17px;background:#3b3a32"></div>
<div class="abs" style="left:84px;top:246px;width:1px;height:17px;background:#3b3a32"></div>
<div class="abs" style="left:84px;top:263px;width:1px;height:17px;background:#3b3a32"></div>
<div class="abs" style="left:84px;top:280px;width:1px;height:17px;background:#3b3a32"></div>
<div class="abs" style="left:84px;top:297px;width:1px;height:17px;background:#3b3a32"></div>
<div class="abs" style="left:84px;top:348px;width:1px;height:17px;background:#3b3a32"></div>
<div class="abs" style="left:84px;top:365px;width:1px;height:17px;background:#3b3a32"></div>
<div class="abs" style="left:84px;top:382px;width:1px;height:17px;background:#3b3a32"></div>
<div class="abs" style="left:84px;top:399px;width:1px;height:17px;background:#3b3a32"></div>
<div class="abs" style="left:84px;top:416px;width:1px;height:17px;background:#3b3a32"></div>
<div class="abs" style="left:84px;top:433px;width:1px;height:17px;background:#3b3a32"></div>
<div class="abs" style="left:84px;top:450px;width:1px;height:17px;background:#3b3a32"></div>
<div class="abs" style="left:84px;top:467px;width:1px;height:17px;background:#3b3a32"></div>
<div class="abs" style="left:84px;top:484px;width:1px;height:17px;background:#3b3a32"></div>
<div class="abs" style="left:84px;top:501px;width:1px;height:17px;background:#3b3a32"></div>
<div class="abs" style="left:84px;top:518px;width:1px;height:17px;background:#3b3a32"></div>
<div class="abs" style="left:84px;top:569px;width:1px;height:17px;background:#3b3a32"></div>
<div class="abs" style="left:84px;top:586px;width:1px;height:17px;background:#3b3a32"></div>
<div class="abs" style="left:116px;top:263px;width:1px;height:17px;background:#3b3a32"></div>
<div class="abs" style="left:116px;top:280px;width:1px;height:17px;background:#3b3a32"></div>
<div class="abs" style="left:116px;top:297px;width:1px;height:17px;background:#3b3a32"></div>
<div class="abs" style="left:116px;top:484px;width:1px;height:17px;background:#3b3a32"></div>
<div class="abs" style="left:116px;top:501px;width:1px;height:17px;background:#3b3a32"></div>
<div class="abs" style="left:116px;top:518px;width:1px;height:17px;background:#3b3a32"></div>
<div class="abs" style="left:0;top:0;width:885px;height:4px;background:linear-gradient(#1c1c1a,rgba(39,40,34,0))"></div>
</div>
<div class="abs" style="left:386px;top:336px;width:10px;height:600px;background:#212122"></div>
<div class="abs" style="left:395px;top:336px;width:2px;height:566px;background:#2a2a27"></div>
<div class="abs" style="left:392px;top:538px;width:18px;height:50px;border-radius:0 12px 12px 0;background:#1e1e1e;border:1.5px solid #454545;border-left:none"></div>
<svg class="abs" style="left:397px;top:556px" width="9" height="12"><path d="M7 1.2 L2.2 6.2 L7 11" stroke="#fff" stroke-width="2" fill="none"/></svg>
<div class="abs" style="left:531px;top:466px;width:431px;height:79px;border:3px solid #e9433f"></div>
<div class="abs" style="left:397px;top:902px;width:885px;height:34px;background:#474747"></div>
<div class="abs" style="left:411px;top:911px;font-size:13px;line-height:17px;color:#f2f2f2;white-space:nowrap;-webkit-text-stroke:0.25px #f2f2f2">文件位置：<span style="font-size:14.2px">/home/home1/sdk_server/sdk.config.xml</span></div>
<div class="abs" style="left:979px;top:911px;font-size:13px;line-height:17px;color:#eee;white-space:nowrap;-webkit-text-stroke:0.25px #eee">行 <span style="font-size:14.5px">1 ,</span>列 <span style="font-size:14.5px">0</span></div>
<div class="abs" style="left:1075px;top:911px;font-size:13px;line-height:17px;color:#eee;white-space:nowrap;-webkit-text-stroke:0.25px #eee">历史版本：<span style="font-size:14px">1</span>份</div>
<div class="abs" style="left:1192px;top:911px;font-size:13px;line-height:17px;color:#eee;white-space:nowrap;-webkit-text-stroke:0.25px #eee">空格：<span style="font-size:14px">4</span></div>
<div class="abs" style="left:1270px;top:911px;font-size:13px;line-height:17px;color:#eee;white-space:nowrap;-webkit-text-stroke:0.25px #eee">编</div>
<div class="abs" style="left:1059px;top:902px;width:1px;height:34px;background:#3c3c3c"></div>
<div class="abs" style="left:1177px;top:902px;width:1px;height:34px;background:#3c3c3c"></div>
<div class="abs" style="left:1253px;top:902px;width:1px;height:34px;background:#3c3c3c"></div>
<div class="abs" style="left:1127px;top:926px;width:58px;height:58px;border-radius:50%;background:#f2ecf0;border:3px solid #2f7ee6"></div>
</body></html>
